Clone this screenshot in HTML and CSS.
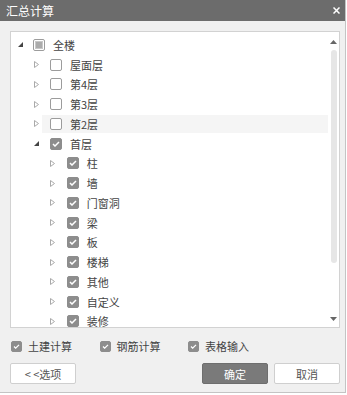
FILE: index.html
```html
<!DOCTYPE html>
<html lang="zh">
<head>
  <meta charset="UTF-8">
  <title>汇总计算</title>
  <link rel="stylesheet" href="styles.css">
</head>
<body>
  <div class="dialog">
    <div class="titlebar">
      <span>汇总计算</span>
      <svg class="close" width="7" height="7" viewBox="0 0 7 7"><path d="M0.5 0.5L6.5 6.5M6.5 0.5L0.5 6.5" stroke="#fff" stroke-width="1.5"/></svg>
    </div>

    <div class="panel">
      <div class="tree">
        <!-- level 0 -->
        <div class="row lv0">
          <span class="arrow"><svg width="5" height="5" viewBox="0 0 5 5"><polygon points="5,0 5,5 0,5" fill="#444"/></svg></span>
          <span class="label"><span class="cb partial"><i></i></span>全楼</span>
        </div>
        <!-- level 1 -->
        <div class="row lv1">
          <span class="arrow"><svg width="5" height="7" viewBox="0 0 5 7"><polygon points="0.5,0.5 4.5,3.5 0.5,6.5" fill="none" stroke="#aaa"/></svg></span>
          <span class="label"><span class="cb"></span>屋面层</span>
        </div>
        <div class="row lv1">
          <span class="arrow"><svg width="5" height="7" viewBox="0 0 5 7"><polygon points="0.5,0.5 4.5,3.5 0.5,6.5" fill="none" stroke="#aaa"/></svg></span>
          <span class="label"><span class="cb"></span>第4层</span>
        </div>
        <div class="row lv1">
          <span class="arrow"><svg width="5" height="7" viewBox="0 0 5 7"><polygon points="0.5,0.5 4.5,3.5 0.5,6.5" fill="none" stroke="#aaa"/></svg></span>
          <span class="label"><span class="cb"></span>第3层</span>
        </div>
        <div class="row lv1">
          <span class="arrow"><svg width="5" height="7" viewBox="0 0 5 7"><polygon points="0.5,0.5 4.5,3.5 0.5,6.5" fill="none" stroke="#aaa"/></svg></span>
          <span class="label hover"><span class="cb"></span>第2层</span>
        </div>
        <div class="row lv1">
          <span class="arrow"><svg width="5" height="5" viewBox="0 0 5 5"><polygon points="5,0 5,5 0,5" fill="#444"/></svg></span>
          <span class="label"><span class="cb checked"><svg width="8" height="6" viewBox="0 0 8 6"><path d="M1 3L3 5L7 1" fill="none" stroke="#fff" stroke-width="1.5"/></svg></span>首层</span>
        </div>
        <!-- level 2 -->
        <div class="row lv2">
          <span class="arrow"><svg width="5" height="7" viewBox="0 0 5 7"><polygon points="0.5,0.5 4.5,3.5 0.5,6.5" fill="none" stroke="#aaa"/></svg></span>
          <span class="label"><span class="cb checked"><svg width="8" height="6" viewBox="0 0 8 6"><path d="M1 3L3 5L7 1" fill="none" stroke="#fff" stroke-width="1.5"/></svg></span>柱</span>
        </div>
        <div class="row lv2">
          <span class="arrow"><svg width="5" height="7" viewBox="0 0 5 7"><polygon points="0.5,0.5 4.5,3.5 0.5,6.5" fill="none" stroke="#aaa"/></svg></span>
          <span class="label"><span class="cb checked"><svg width="8" height="6" viewBox="0 0 8 6"><path d="M1 3L3 5L7 1" fill="none" stroke="#fff" stroke-width="1.5"/></svg></span>墙</span>
        </div>
        <div class="row lv2">
          <span class="arrow"><svg width="5" height="7" viewBox="0 0 5 7"><polygon points="0.5,0.5 4.5,3.5 0.5,6.5" fill="none" stroke="#aaa"/></svg></span>
          <span class="label"><span class="cb checked"><svg width="8" height="6" viewBox="0 0 8 6"><path d="M1 3L3 5L7 1" fill="none" stroke="#fff" stroke-width="1.5"/></svg></span>门窗洞</span>
        </div>
        <div class="row lv2">
          <span class="arrow"><svg width="5" height="7" viewBox="0 0 5 7"><polygon points="0.5,0.5 4.5,3.5 0.5,6.5" fill="none" stroke="#aaa"/></svg></span>
          <span class="label"><span class="cb checked"><svg width="8" height="6" viewBox="0 0 8 6"><path d="M1 3L3 5L7 1" fill="none" stroke="#fff" stroke-width="1.5"/></svg></span>梁</span>
        </div>
        <div class="row lv2">
          <span class="arrow"><svg width="5" height="7" viewBox="0 0 5 7"><polygon points="0.5,0.5 4.5,3.5 0.5,6.5" fill="none" stroke="#aaa"/></svg></span>
          <span class="label"><span class="cb checked"><svg width="8" height="6" viewBox="0 0 8 6"><path d="M1 3L3 5L7 1" fill="none" stroke="#fff" stroke-width="1.5"/></svg></span>板</span>
        </div>
        <div class="row lv2">
          <span class="arrow"><svg width="5" height="7" viewBox="0 0 5 7"><polygon points="0.5,0.5 4.5,3.5 0.5,6.5" fill="none" stroke="#aaa"/></svg></span>
          <span class="label"><span class="cb checked"><svg width="8" height="6" viewBox="0 0 8 6"><path d="M1 3L3 5L7 1" fill="none" stroke="#fff" stroke-width="1.5"/></svg></span>楼梯</span>
        </div>
        <div class="row lv2">
          <span class="arrow"><svg width="5" height="7" viewBox="0 0 5 7"><polygon points="0.5,0.5 4.5,3.5 0.5,6.5" fill="none" stroke="#aaa"/></svg></span>
          <span class="label"><span class="cb checked"><svg width="8" height="6" viewBox="0 0 8 6"><path d="M1 3L3 5L7 1" fill="none" stroke="#fff" stroke-width="1.5"/></svg></span>其他</span>
        </div>
        <div class="row lv2">
          <span class="arrow"><svg width="5" height="7" viewBox="0 0 5 7"><polygon points="0.5,0.5 4.5,3.5 0.5,6.5" fill="none" stroke="#aaa"/></svg></span>
          <span class="label"><span class="cb checked"><svg width="8" height="6" viewBox="0 0 8 6"><path d="M1 3L3 5L7 1" fill="none" stroke="#fff" stroke-width="1.5"/></svg></span>自定义</span>
        </div>
        <div class="row lv2">
          <span class="arrow"><svg width="5" height="7" viewBox="0 0 5 7"><polygon points="0.5,0.5 4.5,3.5 0.5,6.5" fill="none" stroke="#aaa"/></svg></span>
          <span class="label"><span class="cb checked"><svg width="8" height="6" viewBox="0 0 8 6"><path d="M1 3L3 5L7 1" fill="none" stroke="#fff" stroke-width="1.5"/></svg></span>装修</span>
        </div>
      </div>

      <div class="scrollbar">
        <svg width="7" height="4" viewBox="0 0 7 4"><polygon points="3.5,0 7,4 0,4" fill="#666"/></svg>
        <div class="thumb"></div>
        <div class="spacer"></div>
        <svg width="7" height="4" viewBox="0 0 7 4"><polygon points="0,0 7,0 3.5,4" fill="#666"/></svg>
      </div>
    </div>

    <div class="options">
      <label class="opt"><span class="cb checked small"><svg width="7" height="5" viewBox="0 0 8 6"><path d="M1 3L3 5L7 1" fill="none" stroke="#fff" stroke-width="1.5"/></svg></span>土建计算</label>
      <label class="opt"><span class="cb checked small"><svg width="7" height="5" viewBox="0 0 8 6"><path d="M1 3L3 5L7 1" fill="none" stroke="#fff" stroke-width="1.5"/></svg></span>钢筋计算</label>
      <label class="opt"><span class="cb checked small"><svg width="7" height="5" viewBox="0 0 8 6"><path d="M1 3L3 5L7 1" fill="none" stroke="#fff" stroke-width="1.5"/></svg></span>表格输入</label>
    </div>

    <div class="buttons">
      <button class="btn">&lt; &lt;选项</button>
      <div class="right">
        <button class="btn primary">确定</button>
        <button class="btn">取消</button>
      </div>
    </div>
  </div>
</body>
</html>
```

FILE: styles.css
```css
html {
  background: #fff;
}

body {
  margin: 0;
  font-family: "Noto Sans CJK SC", "Noto Sans", sans-serif;
  font-size: 11px;
  color: #444;
}

.dialog {
  width: 345px;
  height: 392px;
  background: #f0f0f0;
  border-right: 1px solid #c4c4c4;
  border-bottom: 1px solid #c4c4c4;
  display: flex;
  flex-direction: column;
}

.titlebar {
  height: 21px;
  background: #6c6c6c;
  color: #fff;
  font-size: 12px;
  display: flex;
  align-items: center;
  justify-content: space-between;
  padding: 0 4px 0 6px;
  flex-shrink: 0;
}

.close {
  margin-right: 1px;
}

.panel {
  margin: 10px 0 0 10px;
  width: 330px;
  height: 297px;
  box-sizing: border-box;
  border: 1px solid #d2d2d2;
  background: #fff;
  display: flex;
  flex-shrink: 0;
}

.tree {
  flex: 1;
  overflow: hidden;
  padding-top: 3px;
}

.row {
  height: 19.75px;
  display: flex;
  align-items: center;
}

.row.lv0 { padding-left: 2px; }
.row.lv1 { padding-left: 19px; }
.row.lv2 { padding-left: 35.7px; }

.arrow {
  width: 12px;
  display: flex;
  justify-content: center;
  align-items: center;
}

.lv0 .arrow svg {
  margin-left: 3px;
}

.label {
  flex: 1;
  height: 18px;
  display: flex;
  align-items: center;
  padding-left: 8px;
}

.label.hover {
  background: #f5f5f5;
}

.cb {
  width: 12px;
  height: 12px;
  box-sizing: border-box;
  border: 1px solid #9c9c9c;
  border-radius: 2px;
  background: #fff;
  margin-right: 8px;
  display: flex;
  align-items: center;
  justify-content: center;
  flex-shrink: 0;
}

.cb.partial i {
  width: 8px;
  height: 8px;
  box-sizing: border-box;
  background: #ababab;
  border: 1px solid #c8c8c8;
}

.cb.checked {
  background: #8d8d8d;
  border-color: #8d8d8d;
}

.cb.small {
  width: 11px;
  height: 11px;
  margin-right: 6px;
}

.scrollbar {
  width: 11px;
  display: flex;
  flex-direction: column;
  align-items: center;
  padding: 8px 0 6px;
}

.thumb {
  width: 6px;
  height: 213px;
  margin-top: 6px;
  background: #e6e6e6;
  border-radius: 3px;
}

.spacer {
  flex: 1;
}

.options {
  display: flex;
  margin: 12px 0 0 11px;
  height: 12px;
  align-items: center;
}

.opt {
  width: 88.5px;
  display: flex;
  align-items: center;
}

.buttons {
  display: flex;
  justify-content: space-between;
  margin: 11px 0 0 10px;
  width: 330px;
}

.right {
  display: flex;
  gap: 6px;
}

.btn {
  width: 66px;
  height: 21px;
  padding: 0;
  font-family: inherit;
  font-size: 11px;
  color: #555;
  background: #fff;
  border: 1px solid #cfcfcf;
  border-radius: 2px;
}

.btn.primary {
  background: #7a7a7a;
  border-color: #6e6e6e;
  color: #fff;
}
```
